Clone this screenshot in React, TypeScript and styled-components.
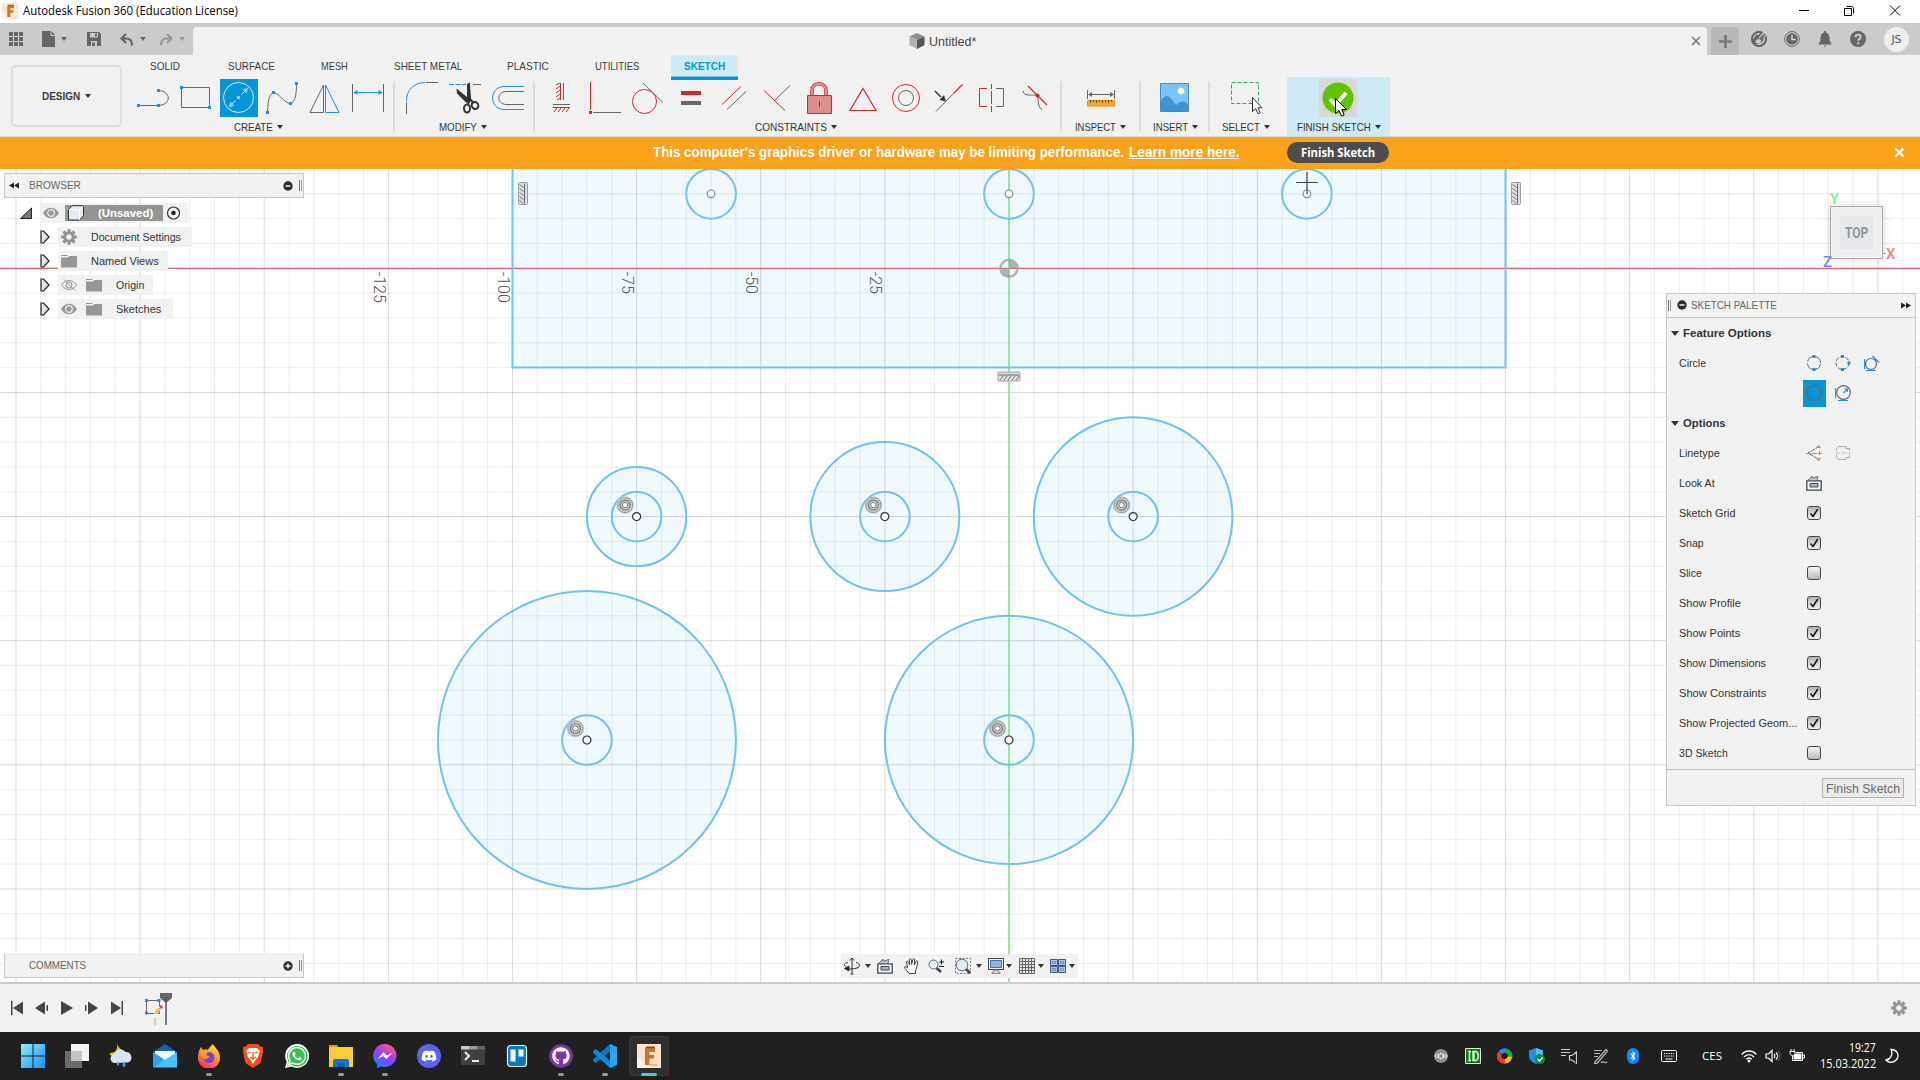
import React, { useLayoutEffect, useRef, useState } from "react";
import styled, { createGlobalStyle, css } from "styled-components";
import { FaBluetoothB, FaDiscord, FaGithub, FaWhatsapp } from "react-icons/fa";

const Global = createGlobalStyle`
  *, *::before, *::after { box-sizing: border-box; }
  body { margin: 0; overflow: hidden; background: #fff; }
  svg { display: block; flex: none; }
`;

const UI = `"Liberation Sans", Arial, sans-serif`;
const SEGOE = `"Open Sans", "Noto Sans", sans-serif`;

/* ---------- text fitted to a fixed advance width ---------- */

const FitBox = styled.span<{ $w: number }>`
  display: inline-block;
  flex: none;
  width: ${(p) => p.$w}px;
  white-space: nowrap;
`;
const FitInner = styled.span`
  display: inline-block;
  transform-origin: 0 50%;
`;
function Fit({ w, children }: { w: number; children: React.ReactNode }) {
  const ref = useRef<HTMLSpanElement>(null);
  const [k, setK] = useState(1);
  useLayoutEffect(() => {
    if (ref.current) setK(w / ref.current.offsetWidth);
  }, [w]);
  return (
    <FitBox $w={w}>
      <FitInner ref={ref} style={{ transform: `scaleX(${k})` }}>
        {children}
      </FitInner>
    </FitBox>
  );
}

const Caret = styled.i<{ $c?: string; $s?: number }>`
  flex: none;
  width: 0;
  height: 0;
  border-left: ${(p) => p.$s ?? 3}px solid transparent;
  border-right: ${(p) => p.$s ?? 3}px solid transparent;
  border-top: ${(p) => (p.$s ?? 3) + 1}px solid ${(p) => p.$c ?? "#333"};
`;

/* ---------- frame ---------- */

const Window = styled.div`
  width: 1920px;
  height: 1080px;
  display: flex;
  flex-direction: column;
  overflow: hidden;
  background: #fff;
  font: 11px/14px ${UI};
  color: #333;
`;

const TitleBar = styled.header`
  height: 23px;
  flex: none;
  display: flex;
  align-items: center;
  padding: 0 17px 2px 2px;
  font: 12px/16px ${SEGOE};
  color: #000;
`;
const TitleText = styled.div`
  margin-left: 5px;
  padding-top: 1px;
  flex: 1;
`;
const WinButtons = styled.div`
  display: flex;
  gap: 30px;
`;

const TabBar = styled.div`
  height: 32px;
  flex: none;
  display: flex;
  align-items: flex-end;
  background: #cbcbcb;
`;
const QuickTools = styled.div`
  width: 193px;
  height: 32px;
  display: flex;
  align-items: center;
  padding-left: 9px;
`;
const QuickItem = styled.span<{ $ml: number }>`
  margin-left: ${(p) => p.$ml}px;
  display: flex;
`;
const DocTab = styled.div`
  width: 1514px;
  height: 28px;
  background: #f1f1f1;
  border-radius: 4px 4px 0 0;
  display: flex;
  align-items: center;
  padding: 0 6px 0 716px;
  font-size: 12px;
  color: #444;
`;
const DocName = styled.div`
  margin-left: 4px;
  padding-top: 1px;
  flex: 1;
`;
const NewTab = styled.div`
  margin-left: 4px;
  width: 28px;
  height: 28px;
  border-radius: 3px 3px 0 0;
  background: #b9b9b9;
  display: flex;
  align-items: center;
  justify-content: center;
`;
const HeaderIcons = styled.div`
  height: 32px;
  display: flex;
  align-items: center;
  gap: 17px;
  margin-left: 12px;
`;
const Avatar = styled.div`
  width: 25px;
  height: 25px;
  margin-left: 1px;
  border-radius: 50%;
  background: #eee;
  color: #555;
  font: 11px/25px "DejaVu Sans", sans-serif;
  text-align: center;
`;

/* ---------- ribbon ---------- */

const Ribbon = styled.div`
  height: 82px;
  flex: none;
  display: flex;
  background: #f1f1f1;
  border-bottom: 1px solid #d8d8d8;
`;
const DesignButton = styled.div`
  margin: 10px 0 0 11px;
  width: 111px;
  height: 62px;
  border: 2px solid #dedede;
  border-radius: 5px;
  display: flex;
  align-items: center;
  justify-content: center;
  gap: 5px;
  font-weight: bold;
  color: #3c3c3c;
`;
const RibbonMain = styled.div`
  display: flex;
  flex-direction: column;
`;
const Tabs = styled.div`
  height: 22px;
  display: flex;
  padding-left: 15px;
`;
const Tab = styled.div<{ $on?: boolean; $ml: number }>`
  height: 25px;
  margin-left: ${(p) => p.$ml}px;
  padding: 4px 13px 0;
  color: #3c3c3c;
  ${(p) =>
    p.$on &&
    css`
      color: #0696d7;
      font-weight: bold;
      background: #cdeaf5;
      border-bottom: 3px solid #0696d7;
      box-shadow: inset 0 -1px #74c3e6;
    `}
`;
const Groups = styled.div`
  height: 59px;
  display: flex;
  padding-left: 12px;
`;
const Group = styled.section<{ $w: number; $ml?: number; $on?: boolean }>`
  width: ${(p) => p.$w}px;
  margin-left: ${(p) => p.$ml ?? 0}px;
  padding-top: 2px;
  display: flex;
  flex-direction: column;
  align-items: center;
  background: ${(p) => (p.$on ? "#cdeaf5" : "none")};
`;
const Tools = styled.div`
  display: flex;
  gap: 5px;
`;
const Tool = styled.div<{ $bg?: string; $back?: number }>`
  position: relative;
  width: 38px;
  height: 38px;
  margin-right: ${(p) => p.$back ?? 0}px;
  background: ${(p) => p.$bg ?? "none"};
`;
const GroupLabel = styled.div<{ $back?: number }>`
  display: flex;
  align-items: center;
  gap: 4px;
  margin: 3px ${(p) => p.$back ?? 0}px 0 0;
  color: #333;
`;
const Divider = styled.i<{ $ml: number }>`
  width: 2px;
  height: 51px;
  margin: 4px 0 0 ${(p) => p.$ml}px;
  background: #dcdcdc;
`;
const Pointer = styled.svg`
  position: absolute;
  left: 15px;
  top: 18px;
`;

const Warning = styled.div`
  position: relative;
  height: 32px;
  flex: none;
  display: flex;
  align-items: center;
  padding: 0 15px 2px 653px;
  background: #faa21b;
  color: #fff;
  font: bold 14px/18px ${UI};
`;
const WarnLink = styled.a`
  margin-left: 5px;
  flex: 1;
`;
const Tooltip = styled.div`
  position: absolute;
  left: 1287px;
  top: 5px;
  width: 102px;
  height: 21px;
  border-radius: 11px;
  background: #4d4d4d;
  text-align: center;
  font: bold 12px/21px ${SEGOE};
`;

/* ---------- canvas and its floating panels ---------- */

const Stage = styled.main`
  position: relative;
  height: 813px;
  flex: none;
  overflow: hidden;
  background: #fff;
`;
const BrowserPanel = styled.aside`
  position: absolute;
  left: 4px;
  top: 4px;
  width: 300px;
`;
const PanelHead = styled.div`
  height: 25px;
  display: flex;
  align-items: center;
  padding: 0 1px 0 4px;
  background: #f1f1f1;
  border: 1px solid #c6c6c6;
  color: #666;
`;
const HeadTitle = styled.div<{ $ml: number }>`
  flex: 1;
  margin-left: ${(p) => p.$ml}px;
  padding-bottom: 2px;
`;
const PaletteTitle = styled(HeadTitle)`
  display: flex;
  align-items: center;
  gap: 4px;
`;
const Bars = styled.i<{ $ml?: number }>`
  width: 3px;
  height: 11px;
  border-left: 1px solid #777;
  border-right: 1px solid #999;
  margin-left: ${(p) => p.$ml ?? 6}px;
`;
const Tree = styled.div`
  display: flex;
  flex-direction: column;
  gap: 4px;
  padding-top: 5px;
`;
const TreeRow = styled.div<{ $indent: number }>`
  height: 20px;
  display: flex;
  align-items: center;
  padding-left: ${(p) => p.$indent}px;
`;
const TreeBody = styled.div<{ $w: number; $ml: number }>`
  width: ${(p) => p.$w}px;
  margin-left: ${(p) => p.$ml}px;
  height: 20px;
  display: flex;
  align-items: center;
  gap: 9px;
  padding-left: 3px;
  background: #f1f1f1;
`;
const TreeText = styled.span`
  margin-left: 5px;
  display: flex;
`;
const Chosen = styled.div`
  width: 98px;
  height: 16px;
  margin-left: -3px;
  display: flex;
  align-items: center;
  gap: 14px;
  padding-left: 3px;
  background: #949494;
  color: #fff;
  font-weight: bold;
`;
const CommentsPanel = styled(PanelHead)`
  position: absolute;
  left: 4px;
  top: 784px;
  width: 300px;
  padding-left: 24px;
  border-top-color: #f1f1f1;
`;
const Palette = styled.aside`
  position: absolute;
  left: 1666px;
  top: 124px;
  width: 250px;
  height: 513px;
  background: #f1f1f1;
  border: 1px solid #c6c6c6;
  display: flex;
  flex-direction: column;
`;
const PaletteHead = styled.div`
  height: 24px;
  flex: none;
  display: flex;
  align-items: center;
  padding: 0 4px 0 0;
  border-bottom: 1px solid #c6c6c6;
  color: #666;
`;
const PaletteBody = styled.div`
  flex: 1;
`;
const Section = styled.div`
  height: 30px;
  display: flex;
  align-items: center;
  gap: 4px;
  padding-left: 4px;
  font: bold 11px/14px ${UI};
`;
const Option = styled.div`
  height: 30px;
  display: flex;
  align-items: center;
  padding-left: 12px;
`;
const OptionName = styled.div`
  width: 124px;
`;
const OptionTools = styled.div`
  display: flex;
  gap: 6px;
`;
const MiniTool = styled.div<{ $on?: boolean }>`
  width: 23px;
  height: 27px;
  padding-left: 3px;
  display: flex;
  align-items: center;
  background: ${(p) => (p.$on ? "#0696d7" : "none")};
`;
const Box = styled.div`
  width: 14px;
  height: 14px;
  margin: 0 0 1px 4px;
  border: 1px solid #444;
  border-radius: 3px;
  background: linear-gradient(#b4b4b4, #f2f2f2);
`;
const EmptyBox = styled(Box)`
  background: linear-gradient(#f4f4f4, #bbb);
`;
const PaletteFoot = styled.div`
  height: 36px;
  border-top: 1px solid #c0c0c0;
  display: flex;
  justify-content: flex-end;
  padding: 8px 11px 0 0;
`;
const FinishButton = styled.div`
  width: 82px;
  height: 20px;
  padding-left: 3px;
  border: 1px solid #b2b2b2;
  background: #eaeaea;
  color: #6b6b6b;
  font: 12px/20px ${UI};
`;
const Cube = styled.div`
  position: absolute;
  left: 1830px;
  top: 37px;
  width: 53px;
  height: 53px;
  border: 1px solid #aaa;
  background: #eeefef;
  box-shadow: 0 0 8px rgba(0, 0, 0, 0.16);
  display: flex;
  align-items: center;
  justify-content: center;
`;
const CubeFace = styled.div`
  width: 33px;
  height: 33px;
  padding-left: 5px;
  background: #e5e7eb;
  color: #8f9498;
  font: bold 14px/35px Roboto, sans-serif;
`;
const Axis = styled.div<{ $x: number; $y: number; $c: string }>`
  position: absolute;
  left: ${(p) => p.$x}px;
  top: ${(p) => p.$y}px;
  color: ${(p) => p.$c};
  font: 500 15px/14px Roboto, sans-serif;
`;
const NavBar = styled.div`
  position: absolute;
  left: 841px;
  top: 785px;
  width: 237px;
  height: 24px;
  display: flex;
  align-items: center;
  padding-left: 2px;
  background: #f1f1f1;
`;
const NavItem = styled.div<{ $ml?: number; $gap?: number }>`
  display: flex;
  align-items: center;
  gap: ${(p) => p.$gap ?? 3}px;
  margin-left: ${(p) => p.$ml ?? 0}px;
`;

/* ---------- timeline and taskbar ---------- */

const Timeline = styled.footer`
  position: relative;
  height: 50px;
  flex: none;
  display: flex;
  align-items: center;
  padding: 0 13px 0 10px;
  background: #f1f1f1;
  border-top: 2px solid #cbcbcb;
`;
const Playback = styled.div`
  display: flex;
  gap: 11px;
`;
const TimelineTrack = styled.div`
  flex: 1;
  margin-left: 20px;
`;
const Taskbar = styled.nav`
  height: 48px;
  flex: none;
  display: flex;
  align-items: center;
  padding: 0 21px 0 13px;
  background: #202020;
  color: #fff;
`;
const Apps = styled.div`
  flex: 1;
  display: flex;
  gap: 4px;
`;
const AppTile = styled.div<{ $on?: boolean }>`
  width: 40px;
  height: 40px;
  border-radius: 4px;
  display: flex;
  flex-direction: column;
  align-items: center;
  padding-top: 8px;
  gap: 4px;
  background: ${(p) => (p.$on ? "#2e2e2e" : "none")};
  box-shadow: ${(p) => (p.$on ? "inset 0 0 0 1px #383838" : "none")};
`;
const Mark = styled.i<{ $on?: boolean }>`
  width: ${(p) => (p.$on ? 16 : 6)}px;
  height: 3px;
  margin-top: 1px;
  border-radius: 2px;
  background: ${(p) => (p.$on ? "#4cc2ff" : "#9a9a9a")};
`;
const Tray = styled.div`
  display: flex;
  align-items: center;
  gap: 16px;
`;
const Lang = styled.div`
  margin-left: 25px;
  font: 11px/16px ${SEGOE};
`;
const Status = styled.div`
  margin-left: 19px;
  display: flex;
  gap: 8px;
  align-items: center;
`;
const Clock = styled.div`
  width: 57px;
  margin: 0 9px 0 14px;
  display: flex;
  flex-direction: column;
  align-items: flex-end;
  font: 12px/16px ${SEGOE};
`;

/* ---------- icons ---------- */

const G = "#666";
const B = "#1c8fe3";
const R = "#cf2b2b";

const Ic = ({ s = 38, h, vb, children, ...rest }: any) => (
  <svg width={s} height={h ?? s} viewBox={vb ?? `0 0 ${s} ${h ?? s}`} fill="none" strokeWidth={1} {...rest}>
    {children}
  </svg>
);
const Dot = ({ x, y, c = B }: { x: number; y: number; c?: string }) => (
  <rect x={x - 1.5} y={y - 1.5} width={3} height={3} fill={c} stroke="none" />
);

const createIcons = [
  <Ic stroke={G}>
    <path d="M4.5 26.5H24.5C37.5 26 37.5 12 24.5 11.5" />
    <Dot x={4.5} y={26.5} />
    <Dot x={24.5} y={26.5} />
    <Dot x={24.5} y={11.5} />
  </Ic>,
  <Ic stroke={G}>
    <path d="M4.5 8.5h28v20h-28z" />
    <Dot x={4.5} y={8.5} />
    <Dot x={32.5} y={28.5} />
  </Ic>,
  <Ic stroke="#cfeaf8">
    <circle cx={18.5} cy={18.5} r={15} />
    <path d="M11 26l4.500-4.500M21.500 15.500L26 11" />
    <path d="M9 28l1.500-5 3.500 3.500zM28 9l-5 1.500 3.500 3.500z" fill="#8fd0f5" stroke="#8fd0f5" strokeWidth={0.6} />
    <Dot x={18.5} y={18.5} c="#8fd0f5" />
  </Ic>,
  <Ic stroke={G}>
    <path d="M4.500 33.500C5 19 7 15 10.500 13.500C15 13 22 25 27.500 24.500C32 23 33.500 17 33.500 4.500" />
    <Dot x={4.5} y={33.5} />
    <Dot x={10.5} y={13.5} />
    <Dot x={27.5} y={24.5} />
    <Dot x={33.5} y={4.5} />
  </Ic>,
  <Ic>
    <path d="M17.500 6v27.500H4z" stroke={G} />
    <path d="M19.500 6v27.500H33z" stroke={B} />
  </Ic>,
  <Ic>
    <path d="M3.500 5v28M34.500 5v28" stroke={G} />
    <path d="M5 13.500h28" stroke={B} />
    <path d="M4.500 13.500l4-2.500v5zM33.500 13.500l-4-2.500v5z" fill={B} />
  </Ic>,
];

const modifyIcons = [
  <Ic>
    <path d="M3.500 23v12M23 3.500h12" stroke={G} />
    <path d="M3.500 22C3.500 11 11 3.500 22 3.500" stroke={B} />
  </Ic>,
  <Ic>
    <path d="M3 5.500h17" stroke={B} strokeDasharray="5 1.500" />
    <path d="M27 5.500h8" stroke={G} />
    <path d="M10.500 9.500L24 20.500v3.500l-4-.5-9-9zM21 5l2.800-1.500L25 19l-1 5-3-3z" fill="#333" />
    <ellipse cx={21} cy={29.500} rx={3} ry={4} stroke="#333" strokeWidth={2} />
    <ellipse cx={29} cy={26.500} rx={3.200} ry={3.600} stroke="#333" strokeWidth={2} transform="rotate(-40 29 26.500)" />
    <path d="M22 25l2-5 3.500 4" stroke="#333" strokeWidth={2} />
  </Ic>,
  <Ic>
    <path d="M35 7.500H15C-.2 8 -.2 30 15 30.500H35" stroke={B} />
    <path d="M35 12.500H17C7.500 13 7.500 25 17 25.500H35" stroke={G} />
  </Ic>,
];

const constraintIcons = [
  <Ic>
    <path d="M18.500 4v17M18 7l-4 3M18 11l-4 3M18 15l-4 3M14 6l4-2M18 19l-3 2M11 28.500h17M15 29l-3 4M19 29l-3 4M23 29l-3 4M27 29l-3 4" stroke={R} />
    <path d="M21.500 4v17M11 25.500h17" stroke={G} />
  </Ic>,
  <Ic>
    <path d="M5.500 3v28" stroke={R} />
    <path d="M8 33.500h28" stroke={G} />
    <Dot x={5.500} y={33.500} c={R} />
  </Ic>,
  <Ic>
    <circle cx={16.500} cy={22.500} r={12} stroke={R} />
    <path d="M15 4l20 19.500" stroke={G} />
  </Ic>,
  <Ic>
    <path d="M10 12h20v4H10z" fill={R} />
    <path d="M10 22h20v4H10z" fill={G} />
  </Ic>,
  <Ic>
    <path d="M8 25.500L27 7.500" stroke={R} />
    <path d="M13 30.500L32 12.500" stroke={G} />
  </Ic>,
  <Ic>
    <path d="M7 11.500l21 20" stroke={R} />
    <path d="M18 21L33 6.500" stroke={G} />
  </Ic>,
  <Ic>
    <path d="M12 16.500v-5c0-9 14-9 14 0v5" stroke={R} strokeWidth={3.500} />
    <path d="M12 16.500v-5c0-9 14-9 14 0v5" stroke="#e49a9a" strokeWidth={1.800} />
    <path d="M7.500 16.500h24v18h-24z" fill="#df8d8d" stroke={R} />
    <path d="M19.500 22v6" stroke={R} />
  </Ic>,
  <Ic>
    <path d="M20 9.500l13 22h-26z" stroke={R} strokeWidth={1.200} />
  </Ic>,
  <Ic>
    <circle cx={20} cy={19} r={13.500} stroke={R} />
    <circle cx={20} cy={19} r={7.500} stroke={G} />
  </Ic>,
  <Ic>
    <path d="M7 32.500L24 15" stroke={G} />
    <path d="M24.500 14.500L33.500 5.500" stroke={R} strokeWidth={1.300} />
    <path d="M6 12l6 6" stroke="#333" strokeWidth={1.500} />
    <path d="M17 22.500l-6.500-1.500 4.500-5z" fill="#333" />
  </Ic>,
  <Ic>
    <path d="M15 9.500H7.500v18H15M19.500 5v5M19.500 12v13M19.500 27v6" stroke={R} />
    <path d="M24 9.500h7.500v18H24" stroke={G} />
  </Ic>,
  <Ic>
    <path d="M8 12c1 6 8 3 14 4.500c2 3 0 12 5 14" stroke={G} />
    <path d="M13 7l19 19" stroke={R} strokeWidth={1.300} />
    <circle cx={22.500} cy={16.500} r={2} fill={R} />
  </Ic>,
];

const InspectIcon = () => (
  <Ic>
    <path d="M5.500 11v9M32.500 11v9M7 15.500h24" stroke={G} />
    <path d="M6 15.500l4-2.500v5zM32 15.500l-4-2.500v5z" fill={G} />
    <path d="M5.500 21.500h27v5.500h-27z" fill="#fba919" stroke="#e39310" />
    <path d="M8.500 21v3M11.500 21v2M14.500 21v3M17.500 21v2M20.500 21v3M23.500 21v2M26.500 21v3M29.500 21v2" stroke="#5b4a1c" />
  </Ic>
);
const InsertIcon = () => (
  <Ic>
    <path d="M5.500 4.500h28v28h-28z" fill="#7cc3f8" stroke="#3d8ec9" />
    <circle cx={26} cy={12} r={3.200} fill="#fffbd0" stroke="#e8e8b0" />
    <path d="M6 22c2-4 4-5 6-5 4 0 6 6 9 9 3-2 5-4 7-3.500 3 .5 4 2 5 3.500v6H6z" fill="#3f93d0" />
  </Ic>
);
const SelectIcon = () => (
  <Ic>
    <path d="M4.500 3.500h27v21h-27z" stroke="#1faf54" strokeDasharray="4 2" />
    <path d="M25.500 18.500v14l3.200-2.800 2.300 5 2.200-1-2.300-4.900h4.100z" fill="#fff" stroke="#333" />
  </Ic>
);

const Arrow = () => (
  <Pointer width={14} height={21} viewBox="0 0 14 21">
    <path d="M1.500 1.500v15.200l3.600-3.200 2.400 5.600 2.600-1.100-2.300-5.500h4.700z" fill="#fff" stroke="#000" />
  </Pointer>
);

const gearPath = (r0: number, r1: number, n = 8) => {
  const p: string[] = [];
  for (let i = 0; i < n; i++) {
    const a = (i * 2 * Math.PI) / n;
    const q = (r: number, d: number) => `${(8 + r * Math.sin(a + d)).toFixed(2)} ${(8 - r * Math.cos(a + d)).toFixed(2)}`;
    p.push(q(r0, -0.3), q(r1, -0.2), q(r1, 0.2), q(r0, 0.3));
  }
  return `M${p.join("L")}z`;
};
const Gear = () => (
  <Ic s={16}>
    <path d={gearPath(5.6, 8)} fill="#949494" />
    <circle cx={8} cy={8} r={2.700} fill="#f1f1f1" />
  </Ic>
);
const Eye = ({ off }: { off?: boolean }) =>
  off ? (
    <Ic s={16} stroke="#999">
      <path d="M.5 8c4-6 11-6 15 0c-4 6-11 6-15 0z" />
      <circle cx={8} cy={8} r={3} />
      <path d="M3 2.500l11 11" />
    </Ic>
  ) : (
    <Ic s={16}>
      <path d="M0 8c4-7 12-7 16 0c-4 7-12 7-16 0z" fill="#999" />
      <circle cx={8} cy={8} r={3.300} stroke="#f1f1f1" strokeWidth={1.200} />
    </Ic>
  );
const Folder = () => (
  <Ic s={16}>
    <path d="M0 2h6l1 1H0zM0 4.500h7l1.500-1.500H16v11.500H0z" fill="#969696" />
  </Ic>
);
const Expand = () => (
  <Ic s={10} h={14}>
    <path d="M1 1h2.500L9 7l-5.500 6H1z" fill="#e4e4e8" stroke="#222" strokeWidth={1.200} />
  </Ic>
);
const Round = ({ plus }: { plus?: boolean }) => (
  <Ic s={10}>
    <circle cx={5} cy={5} r={4.700} fill="#2b2b2b" />
    <path d={plus ? "M2.500 5h5M5 2.500v5" : "M2.500 5h5"} stroke="#fff" strokeWidth={1.400} />
  </Ic>
);
const Double = ({ flip }: { flip?: boolean }) => (
  <Ic s={10} h={7}>
    <path d={flip ? "M5 .5v6L10 3.500zM0 .5v6L5 3.500z" : "M5 .5v6L0 3.500zM10 .5v6L5 3.500z"} fill="#222" />
  </Ic>
);
const LookAt = () => (
  <Ic s={16}>
    <path d="M.8 5.800h14.400v9.400H.8z" fill="#f4f7fa" stroke="#445" strokeWidth={1.300} />
    <path d="M4 8.500h8v3.500H4z" fill="#a5b8c9" stroke="#445" />
    <path d="M2 5l4-4v2l6-1.500-1 3.500" fill="#b9c4cd" stroke="#556" strokeWidth={0.800} />
  </Ic>
);
const Tick = () => (
  <Ic s={12}>
    <path d="M2.500 6.500l2.500 3L9.800 2" stroke="#111" strokeWidth={1.500} />
  </Ic>
);

const FusionIcon = ({ s }: { s: number }) => (
  <Ic s={s} vb="0 0 24 24">
    <path d="M0 0h24v24H0z" fill="#fbe3d0" />
    <path d="M0 12L12 24H0z" fill="#fff3e8" />
    <path d="M8 4h10v4h-5.500v3H17v3.500h-4.500V21H8z" fill="#c8762c" />
    <path d="M8 4l2-1.500h8V4z" fill="#8c4a14" />
    {s > 20 && <path d="M13 20h7v2h-7z" fill="#eab58a" />}
  </Ic>
);

/* ---------- sketch ---------- */

const U = 24.826;
const OX = 1009;
const OY = 99.3;
const px = (n: number) => OX + n * U;
const py = (n: number) => OY + n * U;
const wheels: [number, number, number][] = [
  [-15, 10, 2],
  [-5, 10, 3],
  [5, 10, 4],
  [-17, 19, 6],
  [0, 19, 5],
];
const range = (a: number, b: number) => Array.from({ length: b - a + 1 }, (_, i) => a + i);

const Hatch = ({ x, y, r }: { x: number; y: number; r?: number }) => (
  <g transform={`translate(${x} ${y}) rotate(${r ?? 0})`} stroke="#9a9d9f" fill="none">
    <rect x={-11} y={-4.500} width={22} height={9} rx={1} fill="#dcdfe0" />
    <path d="M-10 -1.500h20" stroke="#666" />
    <path d="M-9 3.500l3-4M-5 3.500l3-4M-1 3.500l3-4M3 3.500l3-4M7 3.500l3-4" stroke="#777" />
  </g>
);

const Sketch = () => (
  <svg width={1920} height={813} fill="none">
    <rect x={px(-20)} y={-60} width={40 * U} height={py(4) + 60} fill="#eff8fe" />
    {wheels.map(([x, y, r]) => (
      <circle key={`${x}${y}`} cx={px(x)} cy={py(y)} r={r * U} fill="#eff8fe" />
    ))}
    {range(-40, 36).map((n) => (
      <path key={n} d={`M${px(n)} 0V813`} stroke="#000" strokeOpacity={n % 5 ? 0.075 : 0.15} />
    ))}
    {range(-3, 28).map((n) => (
      <path key={n} d={`M0 ${py(n)}H1920`} stroke="#000" strokeOpacity={n % 5 ? 0.075 : 0.15} />
    ))}
    <path d={`M0 ${OY}H1920`} stroke="#d9696f" strokeWidth={1.200} />
    <path d={`M${OX} 0V813`} stroke="#86e58a" strokeWidth={1.600} />
    <g stroke="#6fc2e8" strokeWidth={2}>
      <path d={`M${px(-20)} -5V${py(4)}H${px(20)}V-5`} />
      {wheels.map(([x, y, r]) => (
        <g key={`${x}${y}`}>
          <circle cx={px(x)} cy={py(y)} r={r * U} />
          <circle cx={px(x)} cy={py(y)} r={U} />
        </g>
      ))}
      {[-12, 0, 12].map((x) => (
        <circle key={x} cx={px(x)} cy={py(-3)} r={U} />
      ))}
    </g>
    {[-12, 0, 12].map((x) => (
      <circle key={x} cx={px(x)} cy={py(-3)} r={3.800} fill="#fafafa" stroke="#888" strokeWidth={1.200} />
    ))}
    {wheels.map(([x, y]) => (
      <g key={`${x}${y}`} transform={`translate(${px(x)} ${py(y)})`}>
        <circle r={4} fill="#fff" stroke="#333" strokeWidth={1.200} />
        <circle cx={-11.500} cy={-11.500} r={8.800} fill="#cdd0d2" />
        <circle cx={-11.500} cy={-11.500} r={7.500} stroke="#96999b" />
        <circle cx={-11.500} cy={-11.500} r={5} stroke="#777" strokeWidth={1.200} />
        <circle cx={-11.500} cy={-11.500} r={2.700} fill="#fff" stroke="#777" />
      </g>
    ))}
    <g transform={`translate(${OX} ${OY})`} opacity={0.75}>
      <circle r={8.500} stroke="#969b9d" strokeWidth={2.500} />
      <path d="M0 0V-9A9 9 0 0 1 9 0zM0 0V9A9 9 0 0 1 -9 0z" fill="#969b9d" />
    </g>
    <path d="M1296 13.500h22M1307 3v22" stroke="#444" strokeWidth={1.200} />
    <path d="M1883 84.500h3" stroke="#ff8080" />
    <Hatch x={523} y={24.500} r={90} />
    <Hatch x={1516} y={24.500} r={90} />
    <Hatch x={1009} y={207.500} />
    <g fill="#555" fontFamily="Roboto, sans-serif" fontWeight={300} fontSize={16}>
      {[-125, -100, -75, -50, -25].map((v) => (
        <text key={v} transform={`translate(${px(v / 5) - 14.500} ${OY + 3.500}) rotate(90)`} textLength={v < -99 ? 31 : 22}>
          {v}
        </text>
      ))}
    </g>
  </svg>
);

/* ---------- taskbar artwork ---------- */

const apps: { art: React.ReactNode; mark?: boolean; on?: boolean }[] = [
  {
    art: (
      <Ic s={24}>
        <defs>
          <linearGradient id="win" x1="0" y1="0" x2="1" y2="1">
            <stop offset="0" stopColor="#8cecff" />
            <stop offset="1" stopColor="#1593f5" />
          </linearGradient>
        </defs>
        <path d="M0 0h11.500v11.500H0zM12.500 0H24v11.500H12.500zM0 12.500h11.500V24H0zM12.500 12.500H24V24H12.500z" fill="url(#win)" />
      </Ic>
    ),
  },
  {
    art: (
      <Ic s={24}>
        <path d="M6 0h18v17H6z" fill="#f4f4f4" />
        <path d="M0 7h17v17H0z" fill="#6b6b6b" />
        <path d="M6 7h11v10H6z" fill="#c4c4c4" />
      </Ic>
    ),
  },
  {
    art: (
      <Ic s={24}>
        <path d="M8 0c2 4 4 6 8 7 0 5-6 8-11 6C2 12 0 10 1 9c5 0 8-3 7-9z" fill="#f7c71d" />
        <path d="M6 19a4.500 4.500 0 0 1 0-9a5.500 5.500 0 0 1 10-2a5.500 5.500 0 0 1 3 10.500z" fill="#d5e5f5" />
        <path d="M9 17.500c-2 2-1 4 0 4s2-2 0-4zM15 17.500c-2.500 3-1.500 5.500 0 5.500s2.500-2.500 0-5.500z" fill="#3f9df0" />
      </Ic>
    ),
  },
  {
    art: (
      <Ic s={24}>
        <path d="M0 8l12-8 12 8v15H0z" fill="#1064ad" />
        <path d="M2 7h20v12H2z" fill="#f4f8fb" />
        <path d="M0 8l12 8L0 23.500z" fill="#27a5e8" />
        <path d="M24 8l-24 15.500h24z" fill="#45c2fb" />
      </Ic>
    ),
  },
  {
    mark: true,
    art: (
      <Ic s={24}>
        <defs>
          <linearGradient id="fox" x1="0.8" y1="0" x2="0.3" y2="1">
            <stop offset="0" stopColor="#ffe234" />
            <stop offset="0.5" stopColor="#ff9320" />
            <stop offset="1" stopColor="#f5256f" />
          </linearGradient>
        </defs>
        <path d="M16 0c1 3 7 6 7 14a11 11 0 0 1-22 0c0-5 1-8 3-11l2 3c2-1 4-1 5 0 1-3 3-4 5-6z" fill="url(#fox)" />
        <circle cx={12} cy={13.500} r={5.500} fill="#7a3fd6" />
        <path d="M4 6l7 2-2 3 4 2-4 2c-3 1-6-4-5-9z" fill="#ff9d1f" />
      </Ic>
    ),
  },
  {
    art: (
      <Ic s={24}>
        <path d="M7 0h10l2.500 2.500 2.500.5 0 5-2.500 11L12 24l-7.500-5L2 8V3l2.500-.5z" fill="#fb4a1c" />
        <path d="M8 4h8l3 3-2 6-2.500 3L12 20l-2.500-4L7 13 5 7z" fill="#fff" />
        <path d="M7 8l3 1M17 8l-3 1M12 8v6M9 13l3 2 3-2" stroke="#fb4a1c" strokeWidth={1.300} />
      </Ic>
    ),
  },
  {
    art: (
      <Ic s={24}>
        <path d="M0 24l1.800-6A12 12 0 1 1 6.500 22.500z" fill="#fff" />
        <path d="M2 22l1.500-4.500A10.300 10.300 0 1 1 6.500 20.700z" fill="#35c04d" />
        <g transform="translate(1.500 1.500)">
          <FaWhatsapp size={21} color="#fff" />
        </g>
      </Ic>
    ),
  },
  {
    mark: true,
    art: (
      <Ic s={24}>
        <path d="M0 1h8l2 3h-10z" fill="#d99a13" />
        <path d="M0 3h24v20H0z" fill="#ffca3a" />
        <path d="M4 17a2 2 0 0 1 2-2h12a2 2 0 0 1 2 2v6H4z" fill="#0f76cf" />
        <path d="M8 19.500h8V23H8z" fill="#0a5aa3" />
      </Ic>
    ),
  },
  {
    mark: true,
    art: (
      <Ic s={24}>
        <defs>
          <linearGradient id="msg" x1="0.8" y1="0" x2="0.2" y2="1">
            <stop offset="0" stopColor="#ff6a6b" />
            <stop offset="0.45" stopColor="#a636f5" />
            <stop offset="1" stopColor="#0a85ff" />
          </linearGradient>
        </defs>
        <path d="M12 0a12 11.500 0 1 1-4 22.500L4 24v-4A11.500 11.500 0 0 1 12 0z" fill="url(#msg)" />
        <path d="M4.500 15l6-7 3.500 3.500 5.500-3-6 6.500-3.500-3z" fill="#fff" />
      </Ic>
    ),
  },
  {
    art: (
      <Ic s={24}>
        <circle cx={12} cy={12} r={12} fill="#5865f2" />
        <g transform="translate(4 4)">
          <FaDiscord size={16} color="#fff" />
        </g>
      </Ic>
    ),
  },
  {
    art: (
      <Ic s={24}>
        <rect y={2} width={24} height={19} rx={1} fill="#404040" />
        <path d="M0 2h8v3.500H0z" fill="#ccc" />
        <path d="M8 2h8v3.500H8z" fill="#999" />
        <path d="M16 2h8v3.500h-8z" fill="#666" />
        <path d="M4 8l4 4-4 4M11 17h7" stroke="#eee" strokeWidth={2} />
      </Ic>
    ),
  },
  {
    art: (
      <Ic s={24}>
        <rect x={2.500} y={1.500} width={19} height={21} rx={3} fill="#0b79bf" stroke="#e8f2f8" strokeWidth={1.200} />
        <path d="M5.500 5.500h5v12h-5zM13.500 5.500h5v7h-5z" fill="#fff" />
      </Ic>
    ),
  },
  {
    mark: true,
    art: (
      <Ic s={24}>
        <circle cx={12} cy={12} r={11.800} fill="#7b35a8" />
        <g transform="translate(3 3)">
          <FaGithub size={18} color="#fff" />
        </g>
      </Ic>
    ),
  },
  {
    mark: true,
    art: (
      <Ic s={24}>
        <path d="M17 0L0 15.500V17l2 1.500h1.500L17.500 7z" fill="#0a7ac2" />
        <path d="M17 24L0 8.500V7l2-1.500h1.500l14 11.500z" fill="#0f8ad6" />
        <path d="M17 0l7 3v18l-7 3z" fill="#2ba6f2" />
      </Ic>
    ),
  },
  { mark: true, on: true, art: <FusionIcon s={24} /> },
];

const trayIcons = [
  <Ic s={16}>
    <circle cx={8} cy={8} r={7} fill="#8c8c8c" />
    <circle cx={8} cy={8} r={2.500} stroke="#fff" />
    <circle cx={3.800} cy={8} r={1.500} stroke="#eee" />
    <circle cx={12.200} cy={8} r={1.500} stroke="#eee" />
  </Ic>,
  <Ic s={16}>
    <path d="M.5.5h15v15H.5z" fill="#0c7a10" stroke="#d7ead7" />
    <path d="M3 3.500h3M4.500 3.500v9M3 12.500h3M8 3.500h3c3 1 3 8 0 9H8zM9 3.500v9" stroke="#d5f2d5" strokeWidth={1.500} />
  </Ic>,
  <Ic s={16} strokeWidth={4.500}>
    <path d="M3.500 5A5.300 5.300 0 0 1 9 2.700" stroke="#2f86f0" />
    <path d="M8.500 2.700A5.300 5.300 0 0 1 13 9.500" stroke="#19a84b" />
    <path d="M13 8.500A5.300 5.300 0 0 1 7 13.200" stroke="#fbbc05" />
    <path d="M8 13.300A5.300 5.300 0 0 1 3 5" stroke="#ea3b2e" />
  </Ic>,
  <Ic s={16}>
    <path d="M7 0l7 2.500V8c0 4-3 6-7 8C3 14 0 12 0 8V2.500z" fill="#1f8fe0" />
    <path d="M7 0l7 2.500V8H7z" fill="#54b8f5" />
    <circle cx={11} cy={11} r={5} fill="#14893a" />
    <path d="M8.500 11l2 2 3-3.500" stroke="#fff" strokeWidth={1.400} />
  </Ic>,
  <Ic s={16} stroke="#ccc">
    <path d="M0 1.500h9M0 4.500h9M0 7.500h5M8.500 7.500h2.500L15.500 4v11.500L11 12H8.500z" strokeWidth={1.200} />
  </Ic>,
  <Ic s={16} stroke="#bbb">
    <path d="M1 2.500h8M1 5.500h6M1 8.500h4M2 14L13 1.500l1.500 1.500L4 15.500H1.500zM8 15c2-3 4 1 6-1" strokeWidth={1.200} />
  </Ic>,
  <Ic s={16}>
    <rect x={2} width={12} height={16} rx={6} fill="#1486f5" />
    <g transform="translate(3 3)">
      <FaBluetoothB size={10} color="#fff" />
    </g>
  </Ic>,
];

const Caption = ({ text, w, back }: { text: string; w: number; back?: number }) => (
  <GroupLabel $back={back}>
    <Fit w={w}>{text}</Fit>
    <Caret $s={3} />
  </GroupLabel>
);

/* label, text width, gap before */
const tabs: [string, number, number][] = [
  ["SOLID", 30, 0],
  ["SURFACE", 47, 22],
  ["MESH", 27, 20],
  ["SHEET METAL", 68, 20],
  ["PLASTIC", 42, 19],
  ["UTILITIES", 44, 20],
  ["SKETCH", 41, 19],
];

const options: [string, number, boolean][] = [
  ["Sketch Grid", 56, true],
  ["Snap", 25, true],
  ["Slice", 23, false],
  ["Show Profile", 62, true],
  ["Show Points", 61, true],
  ["Show Dimensions", 87, true],
  ["Show Constraints", 87, true],
  ["Show Projected Geom...", 118, true],
  ["3D Sketch", 49, false],
];

export default function App() {
  return (
    <>
      <Global />
      <Window>
        <TitleBar>
          <FusionIcon s={16} />
          <TitleText>
            <Fit w={215}>Autodesk Fusion 360 (Education License)</Fit>
          </TitleText>
          <WinButtons>
            <Ic s={16} stroke="#000">
              <path d="M4 7.500h10" />
            </Ic>
            <Ic s={16} stroke="#000">
              <path d="M3.500 5.500h7v7h-7zM5.500 3.500h5c1 0 2 1 2 2v5" />
            </Ic>
            <Ic s={16} stroke="#000">
              <path d="M3 2.500l10 10M13 2.500l-10 10" />
            </Ic>
          </WinButtons>
        </TitleBar>

        <TabBar>
          <QuickTools>
            <Ic s={14}>
              <path fill="#666" d="M0 0h4v4H0zM5 0h4v4H5zM10 0h4v4h-4zM0 5h4v4H0zM5 5h4v4H5zM10 5h4v4h-4zM0 10h4v4H0zM5 10h4v4H5zM10 10h4v4h-4z" />
            </Ic>
            <QuickItem $ml={19}>
              <Ic s={13} h={16}>
                <path d="M0 0h8.500v5H13v11H0zM9.500 0L13 4H9.500z" fill="#666" />
              </Ic>
            </QuickItem>
            <QuickItem $ml={6}>
              <Caret $c="#666" />
            </QuickItem>
            <QuickItem $ml={20}>
              <Ic s={14}>
                <path d="M0 0h12l2 2v12H0z" fill="#666" />
                <path d="M3 1h8v4.500H3zM4 9h6v5H4z" fill="#cbcbcb" />
                <path d="M8 1.500h2v3H8zM5 10.500h3V14H5z" fill="#666" />
              </Ic>
            </QuickItem>
            <QuickItem $ml={19}>
              <Ic s={13}>
                <path d="M6 1L1.500 5.500 6 10M2 5.500h4.500c3.500 0 5.500 2.500 5.500 7" stroke="#666" strokeWidth={2.200} />
              </Ic>
            </QuickItem>
            <QuickItem $ml={7}>
              <Caret $c="#666" />
            </QuickItem>
            <QuickItem $ml={14}>
              <Ic s={13}>
                <path d="M7 1l4.500 4.500L7 10M11 5.500H6.500C3 5.500 1 8 1 12.500" stroke="#999" strokeWidth={2.200} />
              </Ic>
            </QuickItem>
            <QuickItem $ml={6}>
              <Caret $c="#999" />
            </QuickItem>
          </QuickTools>
          <DocTab>
            <Ic s={16}>
              <path d="M8 0l7.500 3.500L8 7 .5 3.500z" fill="#8e8e8e" />
              <path d="M.5 3.500L8 7v9L.5 12z" fill="#b0b0b0" />
              <path d="M15.500 3.500L8 7v9l7.500-4z" fill="#555" />
            </Ic>
            <DocName>
              <Fit w={47}>Untitled*</Fit>
            </DocName>
            <Ic s={10}>
              <path d="M1 1l8 8M9 1L1 9" stroke="#777" strokeWidth={1.600} />
            </Ic>
          </DocTab>
          <NewTab>
            <Ic s={13}>
              <path d="M0 6.500h13M6.500 0v13" stroke="#777" strokeWidth={2.600} />
            </Ic>
          </NewTab>
          <HeaderIcons>
            <Ic s={16}>
              <path d="M11 1.700A7 7 0 1 0 14.300 5" stroke="#666" strokeWidth={2} />
              <path d="M1 10l4-6 5-.5-2.500 3 1.500 1.800 4-3.300L12 10l-3 2.500L3 13z" fill="#666" />
              <path d="M4.500 12c0-3 1-4 3-4l3 1.500-1.500 3z" fill="#cbcbcb" />
              <path d="M9 7.500L14 3M7 5.500L11.500 1.500" stroke="#666" strokeWidth={1.500} />
            </Ic>
            <Ic s={16}>
              <circle cx={8} cy={8} r={7.400} stroke="#666" />
              <circle cx={8} cy={8} r={5.800} fill="#666" />
              <path d="M8 4v4.500h3.500" stroke="#ddd" strokeWidth={1.300} />
            </Ic>
            <Ic s={16}>
              <path d="M8 0c1 0 1.200.7 1.200 1.500C12 2.500 12.500 5 12.500 8c0 3 2 4 2 5.500h-13C1.500 12 3.500 11 3.500 8c0-3 .5-5.500 3.300-6.500C6.800.700 7 0 8 0zM6.500 14.500h3L8 16z" fill="#666" />
            </Ic>
            <Ic s={16}>
              <circle cx={8} cy={8} r={8} fill="#666" />
              <path d="M5.500 6.200c0-3.500 5.200-3.300 5.200-.2 0 2-2.500 2-2.500 3.800M8.200 11.200v2" stroke="#d4d4d4" strokeWidth={1.900} />
            </Ic>
            <Avatar>JS</Avatar>
          </HeaderIcons>
        </TabBar>

        <Ribbon>
          <DesignButton>
            <Fit w={38}>DESIGN</Fit>
            <Caret />
          </DesignButton>
          <RibbonMain>
            <Tabs>
              {tabs.map(([t, w, ml]) => (
                <Tab key={t} $ml={ml} $on={t === "SKETCH"}>
                  <Fit w={w}>{t}</Fit>
                </Tab>
              ))}
            </Tabs>
            <Groups>
              <Group $w={253}>
                <Tools>
                  {createIcons.map((ic, i) => (
                    <Tool key={i} $bg={i === 2 ? "#0696d7" : undefined}>
                      {ic}
                    </Tool>
                  ))}
                </Tools>
                <Caption text="CREATE" w={39} back={4} />
              </Group>
              <Divider $ml={6} />
              <Group $w={124} $ml={8}>
                <Tools>
                  {modifyIcons.map((ic, i) => (
                    <Tool key={i}>{ic}</Tool>
                  ))}
                </Tools>
                <Caption text="MODIFY" w={38} back={4} />
              </Group>
              <Divider $ml={6} />
              <Group $w={511} $ml={7}>
                <Tools>
                  {constraintIcons.map((ic, i) => (
                    <Tool key={i}>{ic}</Tool>
                  ))}
                </Tools>
                <Caption text="CONSTRAINTS" w={72} back={4} />
              </Group>
              <Divider $ml={7} />
              <Group $w={51} $ml={13}>
                <Tool back-compat={undefined} $back={-1}>
                  <InspectIcon />
                </Tool>
                <Caption text="INSPECT" w={41} />
              </Group>
              <Divider $ml={13} />
              <Group $w={48} $ml={9}>
                <Tool>
                  <InsertIcon />
                </Tool>
                <Caption text="INSERT" w={35} back={-3} />
              </Group>
              <Divider $ml={10} />
              <Group $w={48} $ml={12}>
                <Tool>
                  <SelectIcon />
                </Tool>
                <Caption text="SELECT" w={38} />
              </Group>
              <Group $w={103} $ml={17} $on>
                <Tool $bg="#d8d8d8" $back={1}>
                  <Ic>
                    <circle cx={19} cy={19} r={15.500} fill="#62c400" />
                    <path d="M11 20l5.500 6L27 14" stroke="#fff" strokeWidth={4} />
                  </Ic>
                  <Arrow />
                </Tool>
                <Caption text="FINISH SKETCH" w={74} back={-1} />
              </Group>
            </Groups>
          </RibbonMain>
        </Ribbon>

        <Warning>
          <Fit w={471}>This computer's graphics driver or hardware may be limiting performance.</Fit>
          <WarnLink>
            <Fit w={111}>
              <u>Learn more here.</u>
            </Fit>
          </WarnLink>
          <Ic s={11}>
            <path d="M1.500 1.500l8 8M9.500 1.500l-8 8" stroke="#fff" strokeWidth={2.200} />
          </Ic>
          <Tooltip>
            <Fit w={74}>Finish Sketch</Fit>
          </Tooltip>
        </Warning>

        <Stage>
          <Sketch />

          <BrowserPanel>
            <PanelHead>
              <Double />
              <HeadTitle $ml={10}>
                <Fit w={52}>BROWSER</Fit>
              </HeadTitle>
              <Round />
              <Bars />
            </PanelHead>
            <Tree>
              <TreeRow $indent={16}>
                <Ic s={12}>
                  <path d="M11.500 1v10.500H.5z" fill="#777" stroke="#222" />
                </Ic>
                <TreeBody $w={148} $ml={8}>
                  <Eye />
                  <Chosen>
                    <Ic s={16}>
                      <path d="M.5 4.500L4 .7h11.500v10L11.500 15H.5z" fill="#e6ebf1" stroke="#333" />
                      <path d="M.5 4.500h11V15M11.500 4.500l4-3.800" stroke="#fff" />
                    </Ic>
                    <Fit w={55}>(Unsaved)</Fit>
                  </Chosen>
                  <QuickItem $ml={-6}>
                    <Ic s={14}>
                      <circle cx={7.5} cy={7} r={6} stroke="#333" strokeWidth={1.200} />
                      <circle cx={7.5} cy={7} r={2.300} fill="#222" />
                    </Ic>
                  </QuickItem>
                </TreeBody>
              </TreeRow>
              <TreeRow $indent={36}>
                <Expand />
                <TreeBody $w={134} $ml={8}>
                  <Gear />
                  <TreeText>
                    <Fit w={90}>Document Settings</Fit>
                  </TreeText>
                </TreeBody>
              </TreeRow>
              <TreeRow $indent={36}>
                <Expand />
                <TreeBody $w={110} $ml={8}>
                  <Folder />
                  <TreeText>
                    <Fit w={68}>Named Views</Fit>
                  </TreeText>
                </TreeBody>
              </TreeRow>
              <TreeRow $indent={36}>
                <Expand />
                <TreeBody $w={95} $ml={8}>
                  <Eye off />
                  <Folder />
                  <TreeText>
                    <Fit w={28}>Origin</Fit>
                  </TreeText>
                </TreeBody>
              </TreeRow>
              <TreeRow $indent={36}>
                <Expand />
                <TreeBody $w={115} $ml={8}>
                  <Eye />
                  <Folder />
                  <TreeText>
                    <Fit w={45}>Sketches</Fit>
                  </TreeText>
                </TreeBody>
              </TreeRow>
            </Tree>
          </BrowserPanel>

          <CommentsPanel>
            <HeadTitle $ml={0}>
              <Fit w={57}>COMMENTS</Fit>
            </HeadTitle>
            <Round plus />
            <Bars />
          </CommentsPanel>

          <Axis $x={1830} $y={23} $c="#8df08d">
            Y
          </Axis>
          <Axis $x={1886} $y={78} $c="#ff8080">
            X
          </Axis>
          <Cube>
            <CubeFace>
              <Fit w={23}>TOP</Fit>
            </CubeFace>
          </Cube>
          <Axis $x={1823} $y={86} $c="#8080ff">
            Z
          </Axis>

          <Palette>
            <PaletteHead>
              <Bars $ml={1} />
              <PaletteTitle $ml={6}>
                <Round />
                <Fit w={86}>SKETCH PALETTE</Fit>
              </PaletteTitle>
              <Double flip />
            </PaletteHead>
            <PaletteBody>
              <Section>
                <Caret $s={4.5} />
                <Fit w={88}>Feature Options</Fit>
              </Section>
              <Option>
                <OptionName>
                  <Fit w={27}>Circle</Fit>
                </OptionName>
                <OptionTools>
                  <MiniTool>
                    <Ic s={16} stroke={G}>
                      <circle cx={8} cy={8} r={6.500} strokeDasharray="8.200 2" strokeDashoffset={-1} />
                      <Dot x={8} y={1.500} />
                      <Dot x={8} y={14.500} />
                    </Ic>
                  </MiniTool>
                  <MiniTool>
                    <Ic s={16} stroke={G}>
                      <circle cx={7.500} cy={8} r={6.500} strokeDasharray="4 1.500" />
                      <Dot x={7.500} y={1.500} />
                      <Dot x={7.500} y={14.500} />
                      <Dot x={14} y={8} />
                    </Ic>
                  </MiniTool>
                  <MiniTool>
                    <Ic s={16}>
                      <circle cx={7} cy={9} r={5.500} stroke={G} strokeWidth={1.200} />
                      <path d="M.6 4v10M2 15.500h10M8.500 1l6.500 6.500" stroke={B} strokeWidth={1.200} />
                    </Ic>
                  </MiniTool>
                </OptionTools>
              </Option>
              <Option>
                <OptionName />
                <OptionTools>
                  <MiniTool $on>
                    <Ic s={16}>
                      <circle cx={8} cy={8} r={7.300} stroke={G} strokeWidth={1.200} />
                      <path d="M6 10l4-4" stroke="#2a88d8" />
                    </Ic>
                  </MiniTool>
                  <MiniTool>
                    <Ic s={16}>
                      <circle cx={8.500} cy={7.500} r={6.800} stroke={G} strokeWidth={1.200} />
                      <path d="M.6 3v10M3 15.500h10M8.500 8l4-4M12.500 7V4h-3" stroke={B} strokeWidth={1.100} />
                    </Ic>
                  </MiniTool>
                </OptionTools>
              </Option>
              <Section>
                <Caret $s={4.5} />
                <Fit w={43}>Options</Fit>
              </Section>
              <Option>
                <OptionName>
                  <Fit w={41}>Linetype</Fit>
                </OptionName>
                <OptionTools>
                  <MiniTool>
                    <Ic s={16}>
                      <path d="M13 1.500L2 8l11 6.500" stroke={G} strokeDasharray="4 1" />
                      <path d="M0 8.500h16M11 1l4 2M13 0v3M11 15l4-2M13 16v-3M13.500 6v4" stroke="#e0803a" strokeDasharray="5 1" />
                    </Ic>
                  </MiniTool>
                  <MiniTool>
                    <Ic s={16}>
                      <path d="M1.500 6V3.500l2-2H11v2h3.500V6M1.500 10v2.500l2 2H11v-2h3.500V10" stroke="#aaa" />
                      <path d="M0 8h16" stroke="#f0b48a" strokeDasharray="5 1" />
                    </Ic>
                  </MiniTool>
                </OptionTools>
              </Option>
              <Option>
                <OptionName>
                  <Fit w={36}>Look At</Fit>
                </OptionName>
                <MiniTool>
                  <LookAt />
                </MiniTool>
              </Option>
              {options.map(([t, w, on]) => (
                <Option key={t}>
                  <OptionName>
                    <Fit w={w}>{t}</Fit>
                  </OptionName>
                  {on ? (
                    <Box>
                      <Tick />
                    </Box>
                  ) : (
                    <EmptyBox />
                  )}
                </Option>
              ))}
            </PaletteBody>
            <PaletteFoot>
              <FinishButton>
                <Fit w={74}>Finish Sketch</Fit>
              </FinishButton>
            </PaletteFoot>
          </Palette>

          <NavBar>
            <NavItem $gap={4}>
              <Ic s={18} stroke="#333">
                <path d="M9 1v16M7 3.500L9 1l2 2.500M7.500 17h3" />
                <path d="M13 5.500c4 1 5 4 1 5.500-3 1-9 1.500-12 .5M5 5.500C1 6.500 0 8 3 9.500" />
                <path d="M6 9v5l-4.500-2.500z" fill="#222" />
              </Ic>
              <Caret />
            </NavItem>
            <NavItem $ml={6}>
              <LookAt />
            </NavItem>
            <NavItem $ml={11}>
              <Ic s={16}>
                <path d="M5 15.500c-1-2-4-4-4.500-6.500 1-1 2 0 3 1L2.500 4c.5-1.300 1.600-1 2 .2L5.500 7 5.300 1.800C5.800.300 7 .500 7.300 2L7.600 6.500 9 1.500c.5-1.200 1.800-1 1.700.5L10.300 7l1.800-3.800c.8-1 1.900-.3 1.600 1-.4 3-1 6-2.200 9v2.300z" fill="#fff" stroke="#444" />
              </Ic>
            </NavItem>
            <NavItem $ml={8}>
              <Ic s={17} h={16}>
                <path d="M8.500 10l4.500 4" stroke="#445" strokeWidth={2.600} />
                <circle cx={5.500} cy={6.500} r={4.500} fill="#e2f1f4" stroke="#668" />
                <path d="M11 4h5M13.500 1.500v5M11 8.500h5" stroke="#222" />
              </Ic>
            </NavItem>
            <NavItem $ml={10} $gap={5}>
              <Ic s={16}>
                <path d="M.5.5h15v15H.5z" stroke="#777" strokeDasharray="2 1.500" />
                <path d="M10 10l5 5" stroke="#445" strokeWidth={2.800} />
                <circle cx={7} cy={7} r={5.800} fill="#dcecf0" stroke="#668" />
              </Ic>
              <Caret />
            </NavItem>
            <NavItem $ml={6} $gap={2}>
              <Ic s={16}>
                <path d="M.5.5h15v11H.5z" fill="#eef2f6" stroke="#445" />
                <path d="M2.500 2.500h11v7h-11z" fill="#8fb5e0" stroke="#4770a8" />
                <path d="M6 12h4v2h2v1.500H4V14h2z" fill="#dde" stroke="#667" strokeWidth={0.700} />
              </Ic>
              <Caret />
            </NavItem>
            <NavItem $ml={7}>
              <Ic s={16}>
                <path d="M.5.5h15v15H.5z" fill="#e4e4e4" />
                <path d="M.5.500v15M3.500.5v15M6.500.5v15M9.500.5v15M12.500.5v15M15.500.5v15M.5.5h15M.5 3.500h15M.5 6.500h15M.5 9.500h15M.5 12.500h15M.5 15.500h15" stroke="#666" />
              </Ic>
              <Caret />
            </NavItem>
            <NavItem $ml={6} $gap={3}>
              <Ic s={16} h={14} stroke="#3d577f">
                <path d="M.5.500h7v6h-7zM8.500.5h7v6h-7zM.5 7.500h7v6h-7zM8.500 7.500h7v6h-7z" fill="#a9c4e6" />
                <path d="M2.500 2.500h3v2h-3zM10.500 2.500h3v2h-3zM2.500 9.500h3v2h-3zM10.500 9.500h3v2h-3z" stroke="#6f8fbd" />
              </Ic>
              <Caret />
            </NavItem>
          </NavBar>
        </Stage>

        <Timeline>
          <Playback>
            <Ic s={14}>
              <path d="M1 0h1.500v14H1zM13 .5v13L3 7z" fill="#444" />
            </Ic>
            <Ic s={14}>
              <path d="M10 .5v13L0 7zM11.500 4H13v6h-1.500z" fill="#444" />
            </Ic>
            <Ic s={14}>
              <path d="M1 0l12 7L1 14z" fill="#444" />
            </Ic>
            <Ic s={14}>
              <path d="M3 .5v13L13 7zM0 4h1.500v6H0z" fill="#444" />
            </Ic>
            <Ic s={14}>
              <path d="M11.500 0H13v14h-1.500zM1 .5v13L11 7z" fill="#444" />
            </Ic>
          </Playback>
          <TimelineTrack>
            <Ic s={30} h={33}>
              <path d="M2.500 8.500h13v13h-13z" stroke={G} />
              <Dot x={2.5} y={8.500} />
              <Dot x={15} y={8.500} />
              <Dot x={2.5} y={21} />
              <path d="M10 22l1-4 4-4 2.500 2.500-4 5.500z" fill="#f1f1f1" />
              <path d="M10.500 22l.8-3 3.700-3.500 2 1.500-3 4.500z" fill="#f5b640" />
              <path d="M15.500 15l1-2L19 15l-1.500 2z" fill="#e33" />
              <path d="M16 1h12v5l-6 5-6-5z" fill="#666" />
              <path d="M22 5v28" stroke="#555" strokeWidth={1.500} />
              <path d="M11 26v7" stroke="#ccc" strokeWidth={2} />
            </Ic>
          </TimelineTrack>
          <Gear />
        </Timeline>

        <Taskbar>
          <Apps>
            {apps.map((a, i) => (
              <AppTile key={i} $on={a.on}>
                {a.art}
                {a.mark && <Mark $on={a.on} />}
              </AppTile>
            ))}
          </Apps>
          <Tray>
            {trayIcons.map((t, i) => (
              <React.Fragment key={i}>{t}</React.Fragment>
            ))}
          </Tray>
          <NavItem $ml={20}>
            <Ic s={16} h={12} stroke="#fff">
              <rect x={0.500} y={0.500} width={15} height={11} rx={1} />
              <path d="M3 3.500h10M3 6h10" strokeDasharray="1.300 1" />
              <path d="M4.500 9h7" />
            </Ic>
          </NavItem>
          <Lang>
            <Fit w={20}>CES</Fit>
          </Lang>
          <Status>
            <Ic s={16} h={14} stroke="#fff" strokeWidth={1.300}>
              <path d="M.7 5.500c4-4.700 10.600-4.700 14.600 0M3 8c3-3.300 7-3.300 10 0M5.300 10.300c1.700-1.700 3.700-1.700 5.400 0" />
              <circle cx={8} cy={12} r={1.500} fill="#fff" stroke="none" />
            </Ic>
            <Ic s={16} stroke="#fff">
              <path d="M1 6h2.500L7 2.500v11L3.500 10H1zM9 6c1 1 1 3 0 4M11 4.500c2 2 2 5 0 7" strokeWidth={1.200} />
              <path d="M13 3c2.500 3 2.500 7 0 10" stroke="#777" />
            </Ic>
            <Ic s={16} stroke="#fff">
              <path d="M7 4.500h6.500v8h-10V9" />
              <path d="M6.500 6h5.500v5H5V8z" fill="#fff" />
              <path d="M14 7h1.500v3H14M2 1v2M5 1v2M1 3.500h5v2c0 1-1 2-2.500 2S1 6.500 1 5.500zM3.500 8v2" />
            </Ic>
          </Status>
          <Clock>
            <Fit w={27}>19:27</Fit>
            <Fit w={56}>15.03.2022</Fit>
          </Clock>
          <Ic s={14} h={16} stroke="#fff" strokeWidth={1.300}>
            <path d="M6 1.500c6 0 8 5 6.500 8.500C10.500 14.500 4.500 16 1 12c4-.5 7.500-5 5-10.500z" />
          </Ic>
        </Taskbar>
      </Window>
    </>
  );
}
